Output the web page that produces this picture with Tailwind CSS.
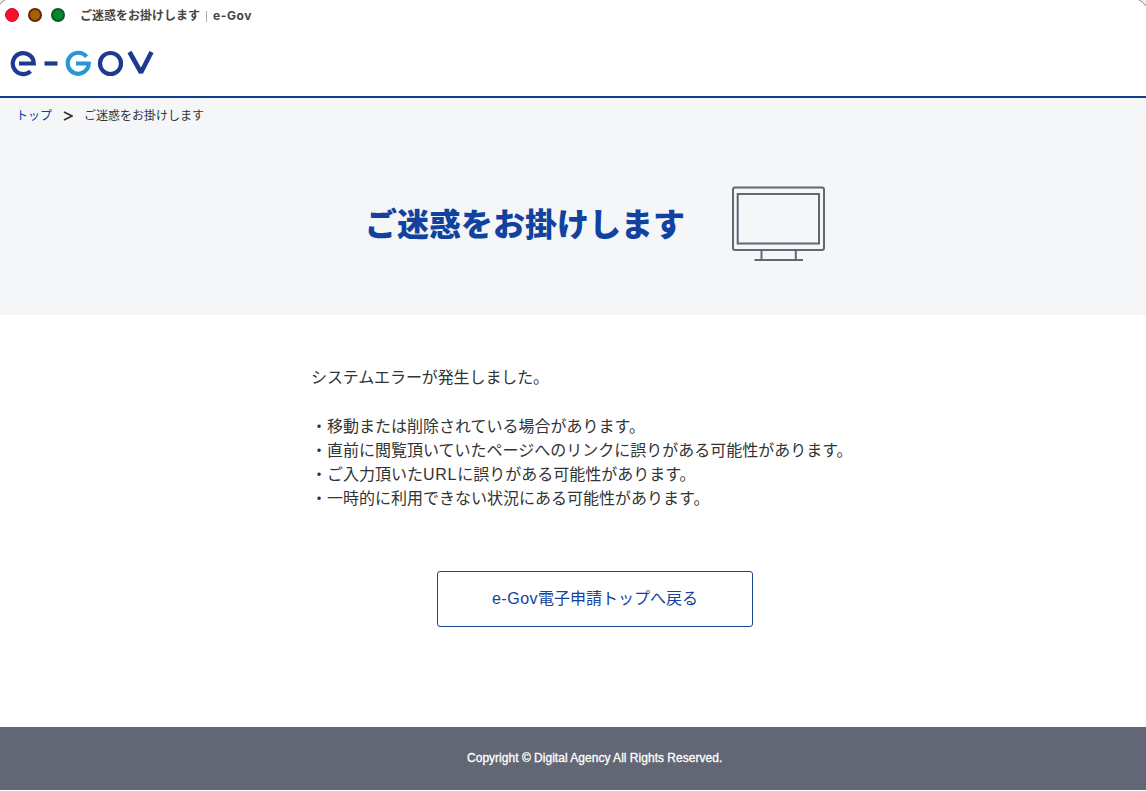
<!DOCTYPE html>
<html lang="ja">
<head>
<meta charset="utf-8">
<title>ご迷惑をお掛けします｜e-Gov</title>
<script src="https://cdn.jsdelivr.net/npm/@tailwindcss/browser@4"></script>
</head>
<body class="bg-white">
<div class="relative flex h-[790px] w-full flex-col overflow-hidden bg-white font-['Liberation_Sans','Noto_Sans_CJK_JP',sans-serif] text-[#333333]">
  <svg class="absolute top-0 left-0" width="8" height="8" viewBox="0 0 8 8" fill="none"><path d="M0 0H6Q2 1 0 5Z" fill="#eeeeee"/><path d="M0 4.500Q1.500 1.500 5 0" stroke="#8a8a8a"/></svg>
  <svg class="absolute top-0 right-0" width="8" height="8" viewBox="0 0 8 8" fill="none"><path d="M1 0H8V6Q5 1 1 0Z" fill="#eeeeee"/><path d="M1 0Q5 1.500 8 6" stroke="#8a8a8a"/></svg>
  <div class="flex h-[30px] shrink-0 items-center pl-[5px]">
    <div class="flex gap-[9px]">
      <span class="size-3.5 rounded-full border border-[#c90b27] bg-[#fa0f2f]"></span>
      <span class="size-3.5 rounded-full border-2 border-[#6b2408] bg-[#a06405]"></span>
      <span class="size-3.5 rounded-full border-2 border-[#075a24] bg-[#08872f]"></span>
    </div>
    <div class="ml-[15px] flex items-center pt-[2px] whitespace-nowrap font-['Inter','Noto_Sans_CJK_JP',sans-serif] text-xs font-bold text-[#444444]"><span>ご迷惑をお掛けします</span><span class="mx-[6px] h-[11px] w-px bg-[#b0b0b0]"></span><span class="tracking-[0.6px]">e-Gov</span></div>
  </div>
  <header class="flex h-[68px] shrink-0 border-b-2 border-[#123e8f] pt-[20px] pl-[10px]">
    <svg width="146" height="28" viewBox="0 0 146 28" fill="none" stroke="#1d3a90" stroke-width="4.200">
      <path d="M9 13.500H23.800A10.500 10.500 0 1 0 20.500 21.200"/>
      <path d="M34.500 13.500H47.500"/>
      <path d="M76.500 6.800A10.500 10.500 0 1 0 78.700 13.500H66" stroke="#2597d4"/>
      <circle cx="100.500" cy="13.500" r="10.500"/>
      <path d="M119.500 2L131 22.500L141.500 2" stroke-linejoin="bevel" stroke-width="4.600"/>
    </svg>
  </header>
  <section class="flex h-[217px] shrink-0 flex-col bg-[#f4f6f8]">
    <nav class="flex h-[35px] items-center pl-4 text-xs whitespace-nowrap">
      <a class="text-[#1242a0]">トップ</a>
      <svg class="ml-[11px]" width="10" height="10" viewBox="0 0 10 10" fill="none" stroke="#333333" stroke-width="1.800"><path d="M1 1L9 5L1 9"/></svg>
      <span class="ml-[11px]">ご迷惑をお掛けします</span>
    </nav>
    <div class="flex h-[182px] items-start pl-[365px]">
      <h1 class="mt-[68px] text-[32px] leading-[48px] font-black whitespace-nowrap text-[#1242a0]">ご迷惑をお掛けします</h1>
      <svg class="mt-[52px] ml-[46px]" width="96" height="78" viewBox="0 0 96 78" fill="none" stroke="#626675" stroke-width="2">
        <rect x="2" y="2.500" width="91" height="62.500" rx="2"/>
        <rect x="6.700" y="9" width="81.300" height="49.500"/>
        <path d="M30.500 65V75M64.800 65V75M23.500 75H72"/>
      </svg>
    </div>
  </section>
  <main class="flex flex-1 flex-col pt-[51px]">
    <div class="pl-[311px] text-base leading-6 whitespace-nowrap">
      <p class="tracking-[-0.1px]">システムエラーが発生しました。</p>
      <ul class="mt-[25px]">
        <li>・移動または削除されている場合があります。</li>
        <li>・直前に閲覧頂いていたページへのリンクに誤りがある可能性があります。</li>
        <li>・ご入力頂いた<span class="tracking-[0.7px]">URL</span>に誤りがある可能性があります。</li>
        <li>・一時的に利用できない状況にある可能性があります。</li>
      </ul>
    </div>
    <a class="mt-[60px] ml-[437px] flex h-14 w-[316px] items-center justify-center rounded-[3px] border border-[#1a458f] text-base text-[#1242a0]"><span class="tracking-[0.5px]">e-Gov</span>電子申請トップへ戻る</a>
  </main>
  <footer class="flex h-[63px] shrink-0 items-center bg-[#636775] pb-[2px] pl-[467px] text-xs whitespace-nowrap text-white">
    <small class="text-xs tracking-[0.02px] [-webkit-text-stroke:0.3px_white]">Copyright © Digital Agency All Rights Reserved.</small>
  </footer>
</div>
</body>
</html>
